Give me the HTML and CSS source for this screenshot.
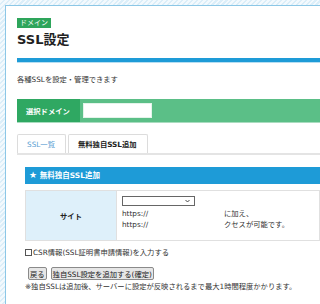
FILE: index.html
```html
<!DOCTYPE html>
<html lang="ja">
  <head>
    <meta charset="UTF-8" />
    <meta name="viewport" content="width=device-width, initial-scale=1.0" />
    <title>SSL設定</title>
    <link rel="stylesheet" href="styles.css">
  </head>
  <body>
    <div class="panel">
      <span class="badge">ドメイン</span>
      <h1 class="title">SSL設定</h1>
      <div class="title-bar"></div>
      <p class="lead">各種SSLを設定・管理できます</p>

      <div class="domain-bar">
        <span class="domain-label">選択ドメイン</span>
        <input type="text" class="domain-input" />
      </div>

      <ul class="tabs">
        <li class="tab">SSL一覧</li>
        <li class="tab active">無料独自SSL追加</li>
      </ul>

      <div class="tab-body">
        <h2 class="box-head"><span class="star">★</span> 無料独自SSL追加</h2>

        <table class="form-table">
          <tr>
            <th>サイト</th>
            <td>
              <div class="site-grid">
                <div class="fake-select">
                  <svg width="5" height="4" viewBox="0 0 5 4"><path d="M0.5 1 L2.5 3 L4.5 1" fill="none" stroke="#333" stroke-width="0.9"/></svg>
                </div>
                <span></span>
                <span>https://</span>
                <span>に加え、</span>
                <span>https://</span>
                <span>クセスが可能です。</span>
              </div>
            </td>
          </tr>
        </table>

        <label class="csr"><span class="check"></span>CSR情報(SSL証明書申請情報)を入力する</label>

        <div class="actions">
          <button type="button">戻る</button>
          <button type="button">独自SSL設定を追加する(確定)</button>
        </div>

        <p class="note">※独自SSLは追加後、サーバーに設定が反映されるまで最大1時間程度かかります。</p>
      </div>
    </div>
  </body>
</html>
```

FILE: styles.css
```css
html,
body {
  margin: 0;
  padding: 0;
  overflow: hidden;
}

body {
  font-family: "DejaVu Sans", "Noto Sans CJK JP", sans-serif;
  color: #333;
  background: repeating-linear-gradient(
    -45deg,
    #dbeef9 0 1.5px,
    #f3f9fd 1.5px 3.5px
  );
  height: 100vh;
  padding: 5px 0 0 5px;
  box-sizing: border-box;
}

.panel {
  height: 100%;
  box-sizing: border-box;
  overflow: hidden;
  background: #fff;
  border-top: 1px solid #8cc7e6;
  border-left: 1px solid #8cc7e6;
  padding: 12px 0 0 11px;
}

.badge {
  display: block;
  width: fit-content;
  height: 10px;
  line-height: 10px;
  padding: 0 3px;
  font-size: 7px;
  color: #fff;
  background: #2ea55b;
}

.title {
  margin: 4px 0 0;
  font-size: 13px;
  line-height: 16px;
  font-weight: bold;
  color: #222;
}

.title-bar {
  margin-top: 10px;
  height: 4px;
  background: #1e9bd7;
  border-bottom: 1px solid #b6def2;
}

.lead {
  margin: 12px 0 0;
  font-size: 7.3px;
  line-height: 9px;
}

/* ===== domain selector ===== */
.domain-bar {
  margin-top: 15px;
  display: flex;
  align-items: center;
  height: 23px;
  background: #5bbf87;
  border-bottom: 1px solid #a9dcbf;
}

.domain-label {
  display: flex;
  align-items: center;
  height: 100%;
  width: 63px;
  padding-left: 9px;
  box-sizing: border-box;
  background: #2fa862;
  color: #fff;
  font-size: 7.3px;
  font-weight: bold;
}

.domain-input {
  margin-left: 3px;
  width: 69px;
  height: 15px;
  box-sizing: border-box;
  border: 1px solid #e4f4ea;
  padding: 0;
  background: #fff;
}

/* ===== tabs ===== */
.tabs {
  list-style: none;
  margin: 11px 0 0;
  padding: 0;
  display: flex;
  gap: 2px;
  border-bottom: 2px solid #e4e4e4;
}

.tab {
  height: 19px;
  line-height: 19px;
  box-sizing: border-box;
  border: 1px solid #dcdcdc;
  border-bottom: none;
  border-radius: 2px 2px 0 0;
  font-size: 7.3px;
  color: #5b9fd3;
  padding: 0 9px;
  width: 49px;
}

.tab.active {
  width: 80px;
  color: #222;
  font-weight: bold;
}

/* ===== form box ===== */
.tab-body {
  padding-left: 8px;
}

.box-head {
  margin: 12px 0 0;
  height: 17px;
  line-height: 17px;
  background: #1e9bd7;
  color: #fff;
  font-size: 7.5px;
  font-weight: bold;
  padding-left: 4px;
}

.star {
  font-size: 9px;
}

.form-table {
  margin-top: 6px;
  width: 100%;
  border-collapse: collapse;
  border: 1px solid #e0e0e0;
  font-size: 7.3px;
}

.form-table th {
  width: 90px;
  height: 49px;
  padding: 0;
  background: #def0fa;
  font-weight: bold;
  color: #222;
  border-right: 1px solid #e0e0e0;
}

.form-table td {
  padding: 5px 0 0 5px;
  vertical-align: top;
}

.site-grid {
  display: grid;
  grid-template-columns: 102px 1fr;
  row-gap: 1px;
  line-height: 10px;
}

.fake-select {
  width: 73px;
  height: 10px;
  box-sizing: border-box;
  border: 1px solid #666;
  display: flex;
  align-items: center;
  justify-content: flex-end;
  padding-right: 4px;
  margin-bottom: 2px;
}

.csr {
  display: flex;
  align-items: center;
  margin-top: 7px;
  font-size: 7.3px;
  line-height: 9px;
}

.check {
  width: 7px;
  height: 7px;
  box-sizing: border-box;
  border: 1px solid #555;
  margin-right: 1px;
}

.actions {
  margin-top: 10px;
  padding-left: 3px;
  display: flex;
  gap: 4px;
}

button {
  font-family: inherit;
  font-size: 7.3px;
  height: 13px;
  padding: 0 1px;
  border: 1px solid #8a8a8a;
  border-radius: 2px;
  background: #e6e6e6;
  color: #222;
}

.note {
  margin: 2px 0 0;
  font-size: 7.3px;
  line-height: 10px;
}
```
